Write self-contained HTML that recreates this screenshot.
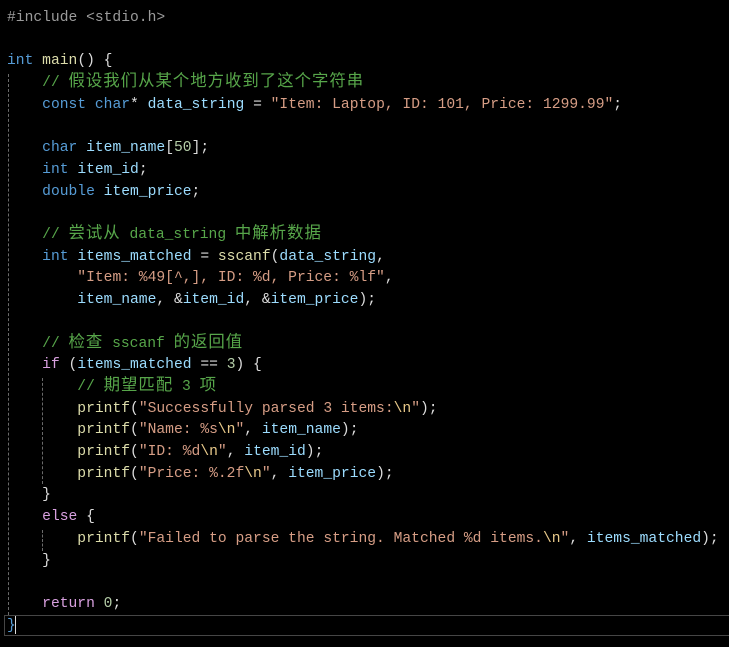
<!DOCTYPE html>
<html><head><meta charset="utf-8"><style>
body{margin:0;background:#000;width:729px;height:647px;overflow:hidden;position:relative}
pre{margin:0;position:absolute;left:7px;top:8px;font-family:"Liberation Mono","Noto Sans CJK SC",monospace;font-size:14.65px;line-height:21.7px;color:#dcdcdc}
.p{color:#9b9b9b}.k{color:#569cd6}.f{color:#dcdcaa}.c{color:#57a64a}.v{color:#9cdcfe}.s{color:#d69d85}.e{color:#e8c98a}.n{color:#b5cea8}.m{color:#d8a0df}.o{color:#b4b4b4}
.z{font-size:16.4px;letter-spacing:1px;line-height:10px}
.g{position:absolute;border-left:1px dashed #6a6a6a;width:0}
.cur{position:absolute;left:4px;top:615px;width:730px;height:19px;border:1px solid #464646;border-right:none}
.caret{position:absolute;left:15px;top:616px;width:1px;height:18px;background:#ddd}
</style></head><body>
<div class="g" style="left:8px;top:74px;height:541px"></div>
<div class="g" style="left:42px;top:378px;height:106px"></div>
<div class="g" style="left:42px;top:530px;height:21px"></div>
<div class="cur"></div><div class="caret"></div>
<pre><span class="p">#include &lt;stdio.h&gt;</span>

<span class="k">int</span> <span class="f">main</span>() {
    <span class="c">// <span class="z">假设我们从某个地方收到了这个字符串</span></span>
    <span class="k">const</span> <span class="k">char</span>* <span class="v">data_string</span> = <span class="s">"Item: Laptop, ID: 101, Price: 1299.99"</span>;

    <span class="k">char</span> <span class="v">item_name</span>[<span class="n">50</span>];
    <span class="k">int</span> <span class="v">item_id</span>;
    <span class="k">double</span> <span class="v">item_price</span>;

    <span class="c">// <span class="z">尝试从</span> data_string <span class="z">中解析数据</span></span>
    <span class="k">int</span> <span class="v">items_matched</span> = <span class="f">sscanf</span>(<span class="v">data_string</span>,
        <span class="s">"Item: %49[^,], ID: %d, Price: %lf"</span>,
        <span class="v">item_name</span>, &amp;<span class="v">item_id</span>, &amp;<span class="v">item_price</span>);

    <span class="c">// <span class="z">检查</span> sscanf <span class="z">的返回值</span></span>
    <span class="m">if</span> (<span class="v">items_matched</span> == <span class="n">3</span>) {
        <span class="c">// <span class="z">期望匹配</span> 3 <span class="z">项</span></span>
        <span class="f">printf</span>(<span class="s">"Successfully parsed 3 items:<span class="e">\n</span>"</span>);
        <span class="f">printf</span>(<span class="s">"Name: %s<span class="e">\n</span>"</span>, <span class="v">item_name</span>);
        <span class="f">printf</span>(<span class="s">"ID: %d<span class="e">\n</span>"</span>, <span class="v">item_id</span>);
        <span class="f">printf</span>(<span class="s">"Price: %.2f<span class="e">\n</span>"</span>, <span class="v">item_price</span>);
    }
    <span class="m">else</span> {
        <span class="f">printf</span>(<span class="s">"Failed to parse the string. Matched %d items.<span class="e">\n</span>"</span>, <span class="v">items_matched</span>);
    }

    <span class="m">return</span> <span class="n">0</span>;
<span class="k">}</span></pre>
</body></html>
